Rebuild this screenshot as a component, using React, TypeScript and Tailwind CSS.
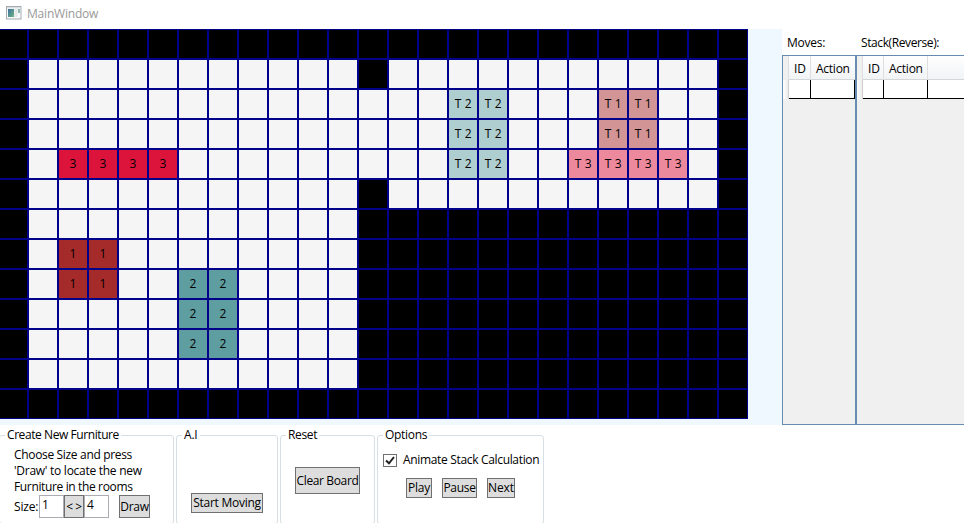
import type { ReactNode } from "react";

type Piece = { label: string; color: string; col: number; row: number; w: number; h: number };

const COLS = 25;
const ROWS = 13;

const pieces: Piece[] = [
  { label: "3", color: "bg-[#dc143c]", col: 2, row: 4, w: 4, h: 1 },
  { label: "1", color: "bg-[#a52a2a]", col: 2, row: 7, w: 2, h: 2 },
  { label: "2", color: "bg-[#5f9ea0]", col: 6, row: 8, w: 2, h: 3 },
  { label: "T 2", color: "bg-[#afcecf]", col: 15, row: 2, w: 2, h: 3 },
  { label: "T 1", color: "bg-[#d29494]", col: 20, row: 2, w: 2, h: 2 },
  { label: "T 3", color: "bg-[#ed899d]", col: 19, row: 4, w: 4, h: 1 },
];

function isFloor(c: number, r: number) {
  if (c >= 1 && c <= 11) return r >= 1 && r <= 11;
  if (c === 12) return r >= 2 && r <= 4;
  return c >= 13 && c <= 23 && r >= 1 && r <= 5;
}

function Cell({ c, r }: { c: number; r: number }) {
  const p = pieces.find((q) => c >= q.col && c < q.col + q.w && r >= q.row && r < q.row + q.h);
  const bg = p ? p.color : isFloor(c, r) ? "bg-[#f5f5f5]" : "bg-black";
  return (
    <div className={`flex items-center justify-center border border-[#00008b] text-[12px] leading-4 ${bg}`}>
      {p && <span className={p.label.length > 1 ? "tracking-[-0.3px] [word-spacing:1px]" : ""}>{p.label}</span>}
    </div>
  );
}

function Board() {
  return (
    <div className="-ml-0.5 grid h-[390px] w-[750px] shrink-0 grid-cols-[repeat(25,30px)] grid-rows-[repeat(13,30px)]">
      {Array.from({ length: COLS * ROWS }, (_, i) => (
        <Cell key={i} c={i % COLS} r={Math.floor(i / COLS)} />
      ))}
    </div>
  );
}

function DataTable({ title, titleClass, className, cols, last }: { title: string; titleClass: string; className: string; cols: string; last?: boolean }) {
  return (
    <div className={`flex shrink-0 flex-col ${className}`}>
      <div className="h-[26px] bg-white pl-[5px] pt-[6px] leading-4">
        <span className={titleClass}>{title}</span>
      </div>
      <div className="flex-1 overflow-hidden border border-[#688caf] bg-[#f0f0f0]">
        <div className={`grid h-6 border-b border-[#d4d7da] bg-linear-to-b from-white to-[#f1f3f5] leading-[26px] ${cols}`}>
          <div className="border-r border-[#dcdee0] bg-[#f0f0f0]" />
          <div className="border-r border-[#dcdee0] pl-[5px]">ID</div>
          <div className={`pl-[5px] ${last ? "border-r border-[#dcdee0]" : ""}`}><span className="tracking-[-0.25px]">Action</span></div>
          {last && <div />}
        </div>
        <div className={`grid h-[19px] ${cols}`}>
          <div className="border-r border-[#d0d0d0] bg-linear-to-r from-white to-[#ececec]" />
          <div className="border-b border-r border-black bg-white" />
          <div className="border-b border-r border-black bg-white" />
          {last && <div className="border-b border-black bg-white" />}
        </div>
      </div>
    </div>
  );
}

function Group({ title, titleClass = "", className, children }: { title: string; titleClass?: string; className: string; children: ReactNode }) {
  return (
    <fieldset className={`h-[98px] shrink-0 rounded-[3px] border border-[#d5dfe5] ${className}`}>
      <legend className="ml-[5px] h-[18px] px-[2px] leading-[18px]">
        <span className={titleClass}>{title}</span>
      </legend>
      {children}
    </fieldset>
  );
}

function Button({ className, textClass = "", children }: { className: string; textClass?: string; children: ReactNode }) {
  return (
    <button className={`flex shrink-0 items-center justify-center whitespace-nowrap border border-[#707070] bg-[#dddddd] leading-4 ${className}`}>
      <span className={textClass}>{children}</span>
    </button>
  );
}

export default function App() {
  return (
    <div className="flex h-[523px] w-[964px] flex-col overflow-hidden whitespace-nowrap bg-white font-['Open_Sans','Noto_Sans',sans-serif] text-[12px] text-black">
      <header className="flex h-[29px] shrink-0 items-center pl-[6px] text-[#999999]">
        <svg width="16" height="14" viewBox="0 0 16 14" className="-mt-[3px] shrink-0">
          <defs>
            <linearGradient id="pane" x1="0" y1="0" x2="1" y2="1">
              <stop offset="0" stopColor="#3c6f9e" />
              <stop offset="1" stopColor="#6fb582" />
            </linearGradient>
          </defs>
          <rect x="0.5" y="0.5" width="14.5" height="12.5" fill="#fafafa" stroke="#a3abb2" />
          <rect x="1" y="1" width="13.5" height="1.5" fill="#d9dde0" />
          <rect x="2" y="3" width="6" height="8" fill="url(#pane)" />
          <rect x="8.5" y="3" width="3" height="8" fill="#e4e6e8" />
          <rect x="12" y="3" width="2" height="4" fill="#8eb9ae" />
        </svg>
        <span className="-mt-[1px] ml-[5px] tracking-[-0.2px]">MainWindow</span>
      </header>

      <main className="flex h-[396px] shrink-0 bg-[#f0f8ff]">
        <Board />
        <div className="ml-[34px] flex">
          <DataTable title="Moves:" titleClass="tracking-[-0.25px]" className="w-[74px]" cols="grid-cols-[6px_22px_44px]" />
          <DataTable title="Stack(Reverse):" titleClass="tracking-[-0.4px]" className="w-[110px]" cols="grid-cols-[6px_21px_44px_1fr]" last />
        </div>
      </main>

      <footer className="flex shrink-0 pt-px">
        <Group title="Create New Furniture" titleClass="tracking-[-0.42px]" className="-ml-px w-[175px]">
          <div className="pl-[14px] pt-[3px] leading-4">
            <div className="tracking-[-0.33px]">Choose Size and press</div>
            <div className="tracking-[-0.27px]">'Draw' to locate the new</div>
            <div className="tracking-[-0.36px]">Furniture in the rooms</div>
          </div>
          <div className="flex pl-[14px]">
            <span className="w-[25px] pt-[4px] leading-4 tracking-[-0.2px]">Size:</span>
            <div className="h-[23px] w-[25px] border border-[#abadb3] pl-[2px] leading-[17px]">1</div>
            <Button className="h-[23px] w-[20px]" textClass="tracking-[-0.5px]">&lt; &gt;</Button>
            <div className="h-[23px] w-[25px] border border-[#abadb3] pl-[2px] leading-[17px]">4</div>
            <Button className="ml-[10px] h-[23px] w-[31px]" textClass="tracking-[-0.3px]">Draw</Button>
          </div>
        </Group>
        <Group title="A.I" titleClass="tracking-[-0.2px]" className="ml-[2px] w-[102px]">
          <Button className="ml-[14px] mt-[49px] h-[20px] w-[72px]" textClass="tracking-[-0.27px]">Start Moving</Button>
        </Group>
        <Group title="Reset" titleClass="tracking-[-0.35px]" className="ml-[2px] w-[95px]">
          <Button className="ml-[14px] mt-[23px] h-[27px] w-[65px]" textClass="tracking-[-0.37px]">Clear Board</Button>
        </Group>
        <Group title="Options" titleClass="tracking-[-0.3px]" className="ml-[2px] w-[167px]">
          <div className="flex items-center pl-[5px] pt-[8px] leading-4">
            <svg width="14" height="13" viewBox="0 0 14 13" className="shrink-0">
              <rect x="0.5" y="0.5" width="13" height="12" fill="white" stroke="#707070" />
              <path d="M3 6.5 L6 9.3 L11 3" fill="none" stroke="#212121" strokeWidth="2" />
            </svg>
            <span className="ml-[6px] tracking-[-0.33px]">Animate Stack Calculation</span>
          </div>
          <div className="flex pl-[28px] pt-[10px]">
            <Button className="h-[20px] w-[26px]" textClass="tracking-[-0.2px]">Play</Button>
            <Button className="ml-[10px] h-[20px] w-[35px]" textClass="tracking-[-0.3px]">Pause</Button>
            <Button className="ml-[10px] h-[20px] w-[28px]" textClass="tracking-[-0.1px]">Next</Button>
          </div>
        </Group>
      </footer>
    </div>
  );
}
